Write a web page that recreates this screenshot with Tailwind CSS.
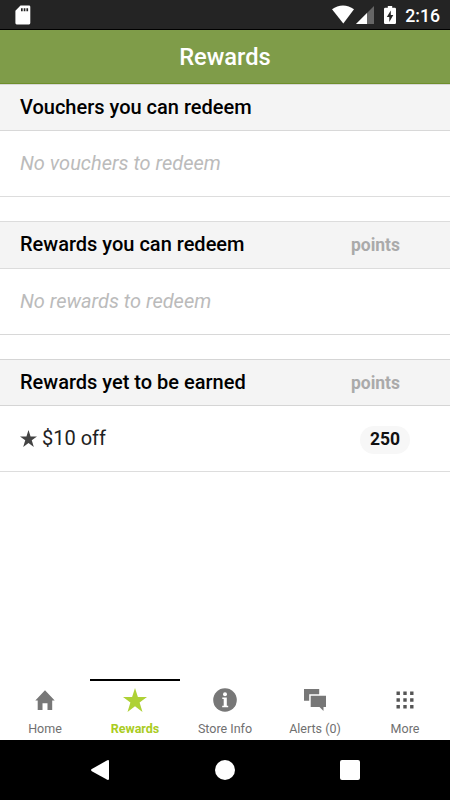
<!doctype html>
<html lang="en">
  <head>
    <meta charset="UTF-8" />
    <meta name="viewport" content="width=device-width, initial-scale=1.0" />
    <title>Rewards</title>
    <script src="https://cdn.jsdelivr.net/npm/@tailwindcss/browser@4"></script>
  </head>
  <body class="bg-white font-['Roboto',sans-serif] text-black">
    <div class="flex h-[800px] w-[450px] flex-col overflow-hidden">
      <!-- Status bar -->
      <div class="flex h-[30px] shrink-0 items-center border-b border-black bg-[#242424] pr-2.5 pl-[15px] text-white">
        <svg class="h-5 w-4" viewBox="0 0 16 20">
          <path d="M5.500.5H14a1.300 1.300 0 0 1 1.300 1.300v16.300a1.300 1.300 0 0 1-1.300 1.300H1.700A1.300 1.300 0 0 1 .4 18.100V5.700z" fill="#fff" />
          <path d="M6 3.300h1.700v3H6zM8.700 3.300h1.700v3H8.700zM11.400 3.300h1.700v3h-1.700z" fill="#242424" />
        </svg>
        <svg class="ml-auto h-[19px] w-[22px]" viewBox="0 0 22 19" fill="currentColor">
          <path d="M0 4.200C6.500-.9 15.500-.9 22 4.200L11.300 18.600z" />
        </svg>
        <svg class="ml-0.5 h-[18px] w-[18px]" viewBox="0 0 18 18">
          <path d="M18 0v18H0z" fill="#666" />
          <path d="M11 7v11H0z" fill="#fff" />
        </svg>
        <svg class="ml-2.5 h-[18px] w-3" viewBox="0 0 12 18">
          <path d="M3.800 0h4.400v1.800h2.600A1.200 1.200 0 0 1 12 3v13.800a1.200 1.200 0 0 1-1.200 1.200H1.200A1.200 1.200 0 0 1 0 16.800V3a1.200 1.200 0 0 1 1.200-1.200h2.600z" fill="#fff" />
          <path d="M6.800 4.500L2.800 11h2.500v5L9.300 9H6.800z" fill="#242424" />
        </svg>
        <span class="ml-[9px] pt-0.5 text-[17.700px] leading-[18px] font-medium">2:16</span>
      </div>

      <!-- Title bar -->
      <header class="flex h-[54px] shrink-0 items-center justify-center border-b border-[#6f8f2b] bg-[#7f9c49]">
        <h1 class="pt-0.5 text-[23.700px] font-medium text-white">Rewards</h1>
      </header>

      <main class="flex-1">
        <section class="mb-6">
          <div class="flex h-[47px] items-center border-y border-[#d8d8d8] bg-[#f4f4f4] px-5 pb-0.5">
            <h2 class="text-xl font-medium">Vouchers you can redeem</h2>
          </div>
          <div class="flex h-[66px] items-center border-b border-[#dddddd] px-5 pb-0.5">
            <p class="text-xl text-[#bbbbbb] italic">No vouchers to redeem</p>
          </div>
        </section>

        <section class="mb-6">
          <div class="flex h-12 items-center justify-between border-y border-[#dcdcdc] bg-[#f4f4f4] pr-[50px] pb-0.5 pl-5">
            <h2 class="text-xl font-medium">Rewards you can redeem</h2>
            <span class="pt-[3px] text-[17.500px] font-bold text-[#aaaaaa]">points</span>
          </div>
          <div class="flex h-[66px] items-center border-b border-[#d8d8d8] px-5 pb-0.5">
            <p class="text-xl text-[#bbbbbb] italic">No rewards to redeem</p>
          </div>
        </section>

        <section>
          <div class="flex h-[47px] items-center justify-between border-y border-[#d5d5d5] bg-[#f4f4f4] pr-[50px] pb-0.5 pl-5">
            <h2 class="text-xl font-medium">Rewards yet to be earned</h2>
            <span class="pt-[3px] text-[17.500px] font-bold text-[#aaaaaa]">points</span>
          </div>
          <div class="flex h-[66px] items-center border-b border-[#dddddd] pr-10 pl-5">
            <svg class="mr-[5px] h-[17px] w-[17px]" viewBox="0 0 24 24" fill="#444">
              <path d="M12 0l2.900 9H24l-7.400 5.500L19.500 24 12 18.200 4.500 24l2.900-9.500L0 9h9.100z" />
            </svg>
            <span class="pb-0.5 text-xl text-[#222222]">$10 off</span>
            <span class="mt-0.5 ml-auto flex h-7 w-[50px] items-center justify-center rounded-full bg-[#f7f7f7] text-[17.500px] font-bold text-[#111111]">250</span>
          </div>
        </section>
      </main>

      <!-- Tab bar -->
      <nav class="grid h-[61px] shrink-0 grid-cols-5 text-[12.500px] text-[#707070]">
        <a class="flex flex-col items-center border-t-2 border-transparent pt-[7px]">
          <svg class="h-6 w-6" viewBox="0 0 24 24" fill="#777">
            <path d="M12 2.200L21.700 12.500h-2.500V22h-4.700v-6.800h-5V22H4.700v-9.500H2.300z" />
          </svg>
          <span class="mt-[7px] leading-5">Home</span>
        </a>
        <a class="flex flex-col items-center border-t-2 border-black pt-[7px] text-[#aacc22]">
          <svg class="h-6 w-6" viewBox="0 0 24 24" fill="#aed136">
            <path d="M12 0l2.900 9H24l-7.400 5.500L19.500 24 12 18.200 4.500 24l2.900-9.500L0 9h9.100z" />
          </svg>
          <span class="mt-[7px] leading-5 font-bold">Rewards</span>
        </a>
        <a class="flex flex-col items-center border-t-2 border-transparent pt-[7px]">
          <svg class="h-6 w-6" viewBox="0 0 24 24">
            <circle cx="12" cy="12" r="11.800" fill="#777" />
            <circle cx="12" cy="6.200" r="2" fill="#fff" />
            <path d="M9.300 9.500h4.500v8.300h1.400v1.500H9.200v-1.500h1.500V11H9.300z" fill="#fff" />
          </svg>
          <span class="mt-[7px] leading-5">Store Info</span>
        </a>
        <a class="flex flex-col items-center border-t-2 border-transparent pt-[7px]">
          <svg class="h-6 w-6" viewBox="0 0 24 24" fill="#777">
            <path d="M1 1h15.200v5.200H6.200v6.600H1z" />
            <path d="M7.700 7.800H23v11.300h-2.500V23l-4-3.900H7.700z" />
          </svg>
          <span class="mt-[7px] leading-5">Alerts (0)</span>
        </a>
        <a class="flex flex-col items-center border-t-2 border-transparent pt-[7px]">
          <svg class="h-6 w-6" viewBox="0 0 24 24" fill="#555">
            <path d="M3.500 3.500h3.400v3.400H3.500zM10.300 3.500h3.400v3.400h-3.400zM17.100 3.500h3.400v3.400h-3.400zM3.500 10.300h3.400v3.400H3.500zM10.300 10.300h3.400v3.400h-3.400zM17.100 10.300h3.400v3.400h-3.400zM3.500 17.100h3.400v3.400H3.500zM10.300 17.100h3.400v3.400h-3.400zM17.100 17.100h3.400v3.400h-3.400z" />
          </svg>
          <span class="mt-[7px] leading-5">More</span>
        </a>
      </nav>

      <!-- Android navigation -->
      <div class="flex h-[60px] shrink-0 items-center bg-black text-white">
        <svg class="ml-[91px] h-5 w-[18px]" viewBox="0 0 18 20" fill="currentColor">
          <path d="M16.300.3Q18-.5 18 1.200v17.600q0 1.700-1.700.9L.8 11.200Q-.8 10 .8 8.900z" />
        </svg>
        <span class="ml-[106px] size-5 rounded-full bg-white"></span>
        <span class="ml-[105px] size-5 rounded-[2px] bg-white"></span>
      </div>
    </div>
  </body>
</html>
